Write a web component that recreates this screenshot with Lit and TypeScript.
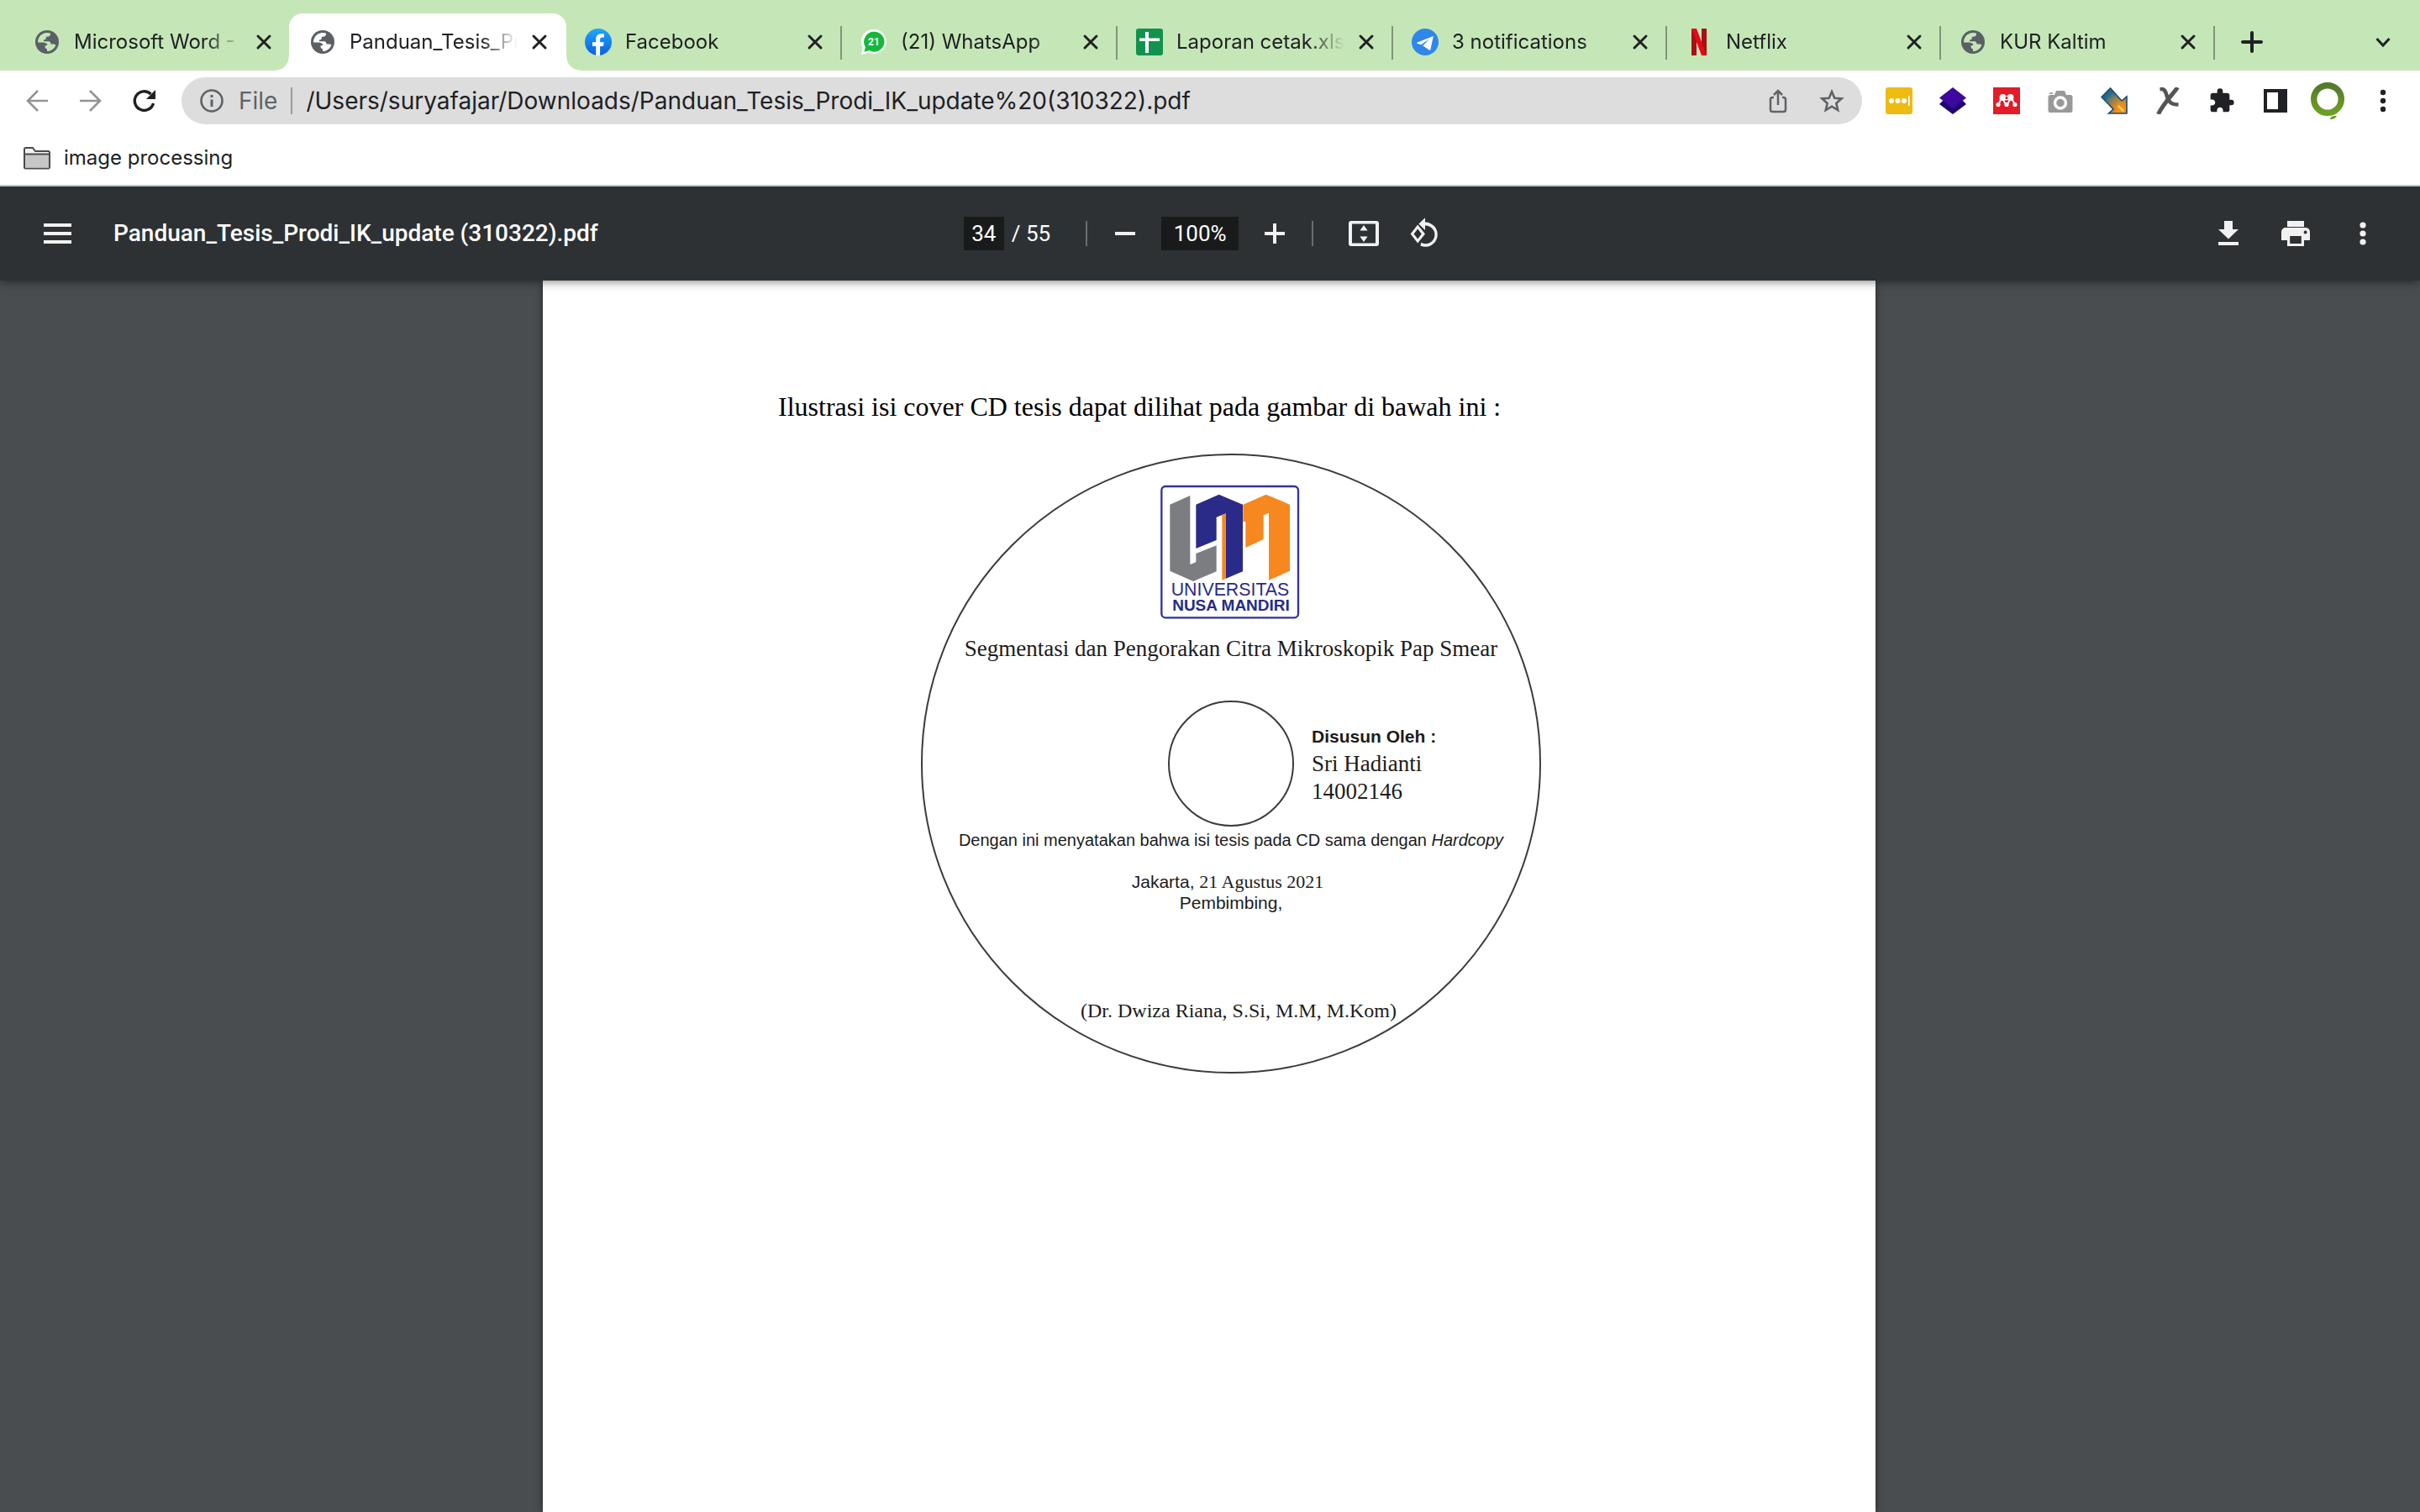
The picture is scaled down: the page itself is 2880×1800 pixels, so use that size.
import { LitElement, html, css, svg, nothing } from "lit";
import { customElement, property, state } from "lit/decorators.js";
import { classMap } from "lit/directives/class-map.js";

const globe = svg`<svg viewBox="-2 -2 32 32">
  <circle cx="14" cy="14" r="14" fill="#5b5f66"/>
  <path class="land" d="M3 14.400C3 8 7.600 3.200 14 3c1.600 0 3 .3 4.200 .8-.2 2.600-1.500 3.900-3.900 3.900H12.800v1.800c0 1.200-.9 1.800-2.200 1.800-.6 0-.8 1-.4 2h5.600c1.900 0 2.700 1.300 2.700 3.200h3.200c1.100 0 2 .3 2.700.9C23 21.600 19 24.800 14 25v-2.800c-1.500 0-2.400-.9-2.400-2.400v-1.600c1.600 0 2.600-.4 3-1.300-1.300-1.500-3.200-2.500-5.400-2.500z"/>
</svg>`;

const facebook = svg`<svg viewBox="0 0 32 32">
  <defs><linearGradient id="fb" x1="0" y1="0" x2="0" y2="1"><stop offset="0" stop-color="#1fa8fb"/><stop offset="1" stop-color="#0a5fe0"/></linearGradient></defs>
  <circle cx="16" cy="16" r="16" fill="url(#fb)"/>
  <path d="M13.200 32V21H9v-4.700h4.200v-3.600c0-4.200 2.500-6.500 6.200-6.500 1.300 0 2.600.1 3.500.3v4h-2.100c-2 0-2.700 1.200-2.700 2.500v3.300h4.600L22 21h-3.900v11z" fill="#fff"/>
</svg>`;

const whatsapp = svg`<svg viewBox="0 0 32 32">
  <path d="M16.500 1a14.500 14.500 0 1 1-6.200 27.700L1 31l1.800-8.600A14.500 14.500 0 0 1 16.500 1z" fill="#fff"/>
  <path d="M16.500 3.700a12 12 0 1 1-6 22.400L4.500 27.700l1.400-5.800A12 12 0 0 1 16.500 3.700z" fill="#14b93c"/>
  <text x="16" y="20" text-anchor="middle" font-family="Roboto, sans-serif" font-weight="700" font-size="12" fill="#fff">21</text>
</svg>`;

const sheets = svg`<svg viewBox="0 0 32 32"><rect width="32" height="32" rx="3" fill="#12934d"/><path d="M11 4h4v7.500h13V15H15v14h-4V15H4v-3.500h7z" fill="#fff"/></svg>`;

const telegram = svg`<svg viewBox="0 0 32 32"><circle cx="16" cy="16" r="16" fill="#2f87ec"/><path d="M25 9.200 6.800 16.400c-.9.400-.8 1 0 1.300l4.400 1.500L21 12.400l-7.600 8 7.500 5.200c.7.400 1.300.2 1.500-.7l3.200-14.800c.2-.8-.2-1.200-.6-.9z" fill="#fff"/></svg>`;

const netflix = svg`<svg viewBox="0 0 32 32"><path d="M7 0h6v32H7z" fill="#a80f16"/><path d="M19 0h6v32h-6z" fill="#a80f16"/><path d="M7 0h6l12 32h-6z" fill="#e50914"/></svg>`;

const closeIcon = svg`<svg viewBox="0 0 32 32"><path d="m9 9 14 14M23 9 9 23" stroke="#202124" stroke-width="3" stroke-linecap="round"/></svg>`;

const ICONS: Record<string, unknown> = {
  share: svg`<svg viewBox="0 0 32 32" fill="none" stroke="#5f6368" stroke-width="2.500"><path d="M11 12H9.500A2.500 2.500 0 0 0 7 14.500v12A2.500 2.500 0 0 0 9.500 29h13a2.500 2.500 0 0 0 2.500-2.500v-12a2.500 2.500 0 0 0-2.500-2.500H21M16 21V4M11 9l5-5 5 5"/></svg>`,
  star: svg`<svg viewBox="0 0 32 32" fill="none" stroke="#5f6368" stroke-width="2.600"><path d="m16 5 3.300 7.700 8.300.7-6.300 5.500 1.900 8.100-7.200-4.300L8.800 27l1.900-8.100-6.300-5.500 8.300-.7z"/></svg>`,
  yellow: svg`<svg viewBox="0 0 32 32"><rect width="32" height="32" rx="3" fill="#edbb12"/><g fill="#fff"><circle cx="7" cy="16" r="3"/><circle cx="14.500" cy="16" r="3"/><circle cx="22" cy="16" r="3"/><path d="M27 10h1.500v12H27z"/></g></svg>`,
  layers: svg`<svg viewBox="0 0 32 32"><path d="m0 20 4-4h24l4 4-16 12z" fill="#20006e"/><path d="m16 0 16 12.500L16 25 0 12.500z" fill="#3d089f"/></svg>`,
  mendeley: svg`<svg viewBox="0 0 32 32"><path d="M0 0h32v32H0z" fill="#e31c27"/><g fill="#fff"><circle cx="11.500" cy="12" r="4"/><circle cx="20.500" cy="12" r="4"/><circle cx="6" cy="20.500" r="2.600"/><circle cx="16" cy="20.500" r="2.600"/><circle cx="26" cy="20.500" r="2.600"/></g><path d="M9 13c0 3-1 5-3 7M23 13c0 3 1 5 3 7M12.500 14c.5 3 1 5 3 6M19.500 14c-.5 3-1 5-3 6" fill="none" stroke="#fff" stroke-width="1.800"/><circle cx="16" cy="13" r="2.500" fill="#fff"/><circle cx="16" cy="12.500" r="1.600" fill="#e31c27"/></svg>`,
  camera: svg`<svg viewBox="0 0 32 32"><path d="M11 4h10l2 5h5a2.500 2.500 0 0 1 2.500 2.500v16A2.500 2.500 0 0 1 28 30H4a2.500 2.500 0 0 1-2.500-2.500v-16A2.500 2.500 0 0 1 4 9h5z" fill="#999"/><path d="M3 6h4v2H3z" fill="#aaa"/><circle cx="16" cy="18.500" r="6.500" fill="#999" stroke="#fff" stroke-width="3.500"/></svg>`,
  arrow: svg`<svg viewBox="0 0 32 32"><defs><radialGradient id="glow" cx=".8" cy=".85" r=".8"><stop offset="0" stop-color="#ff9a0d"/><stop offset=".35" stop-color="#e08a22"/><stop offset=".75" stop-color="#6f7a68"/><stop offset="1" stop-color="#236a8c"/></radialGradient></defs><path d="M1 11.500 11.500 1 25 16l6-5v20H9.500L15 26z" fill="url(#glow)" stroke="#174d72" stroke-width="1.600"/><path d="m21 22 6 6" stroke="#ffe06a" stroke-width="2"/></svg>`,
  cross: svg`<svg viewBox="0 0 32 32" fill="none" stroke="#555"><path d="M27.500 0C22 8 10 20 4.500 32" stroke-width="5"/><path d="M6.500 2H9c3.500 0 4.500 4 6 9 2 6.500 5 9.500 13.500 9.500" stroke-width="4.500"/></svg>`,
  puzzle: svg`<svg viewBox="0 0 24 24"><path d="M20.500 11H19V7c0-1.100-.9-2-2-2h-4V3.500a2.500 2.500 0 0 0-5 0V5H4c-1.100 0-2 .9-2 2v3.800h1.500c1.500 0 2.700 1.200 2.700 2.700s-1.200 2.700-2.700 2.700H2V20c0 1.100.9 2 2 2h3.800v-1.500c0-1.500 1.200-2.700 2.700-2.700s2.700 1.200 2.700 2.700V22H17c1.100 0 2-.9 2-2v-4h1.500a2.500 2.500 0 0 0 0-5z" fill="#202124"/></svg>`,
  panel: svg`<svg viewBox="0 0 32 32"><path fill-rule="evenodd" d="M2 2h28v28H2zm4 4v20h13V6z" fill="#202124"/></svg>`,
  back: svg`<svg viewBox="0 0 32 32" fill="none" stroke="#929496" stroke-width="2.600"><path d="M29 16H5M17 4 5 16l12 12"/></svg>`,
  forward: svg`<svg viewBox="0 0 32 32" fill="none" stroke="#929496" stroke-width="2.600"><path d="M3 16h24M15 4l12 12-12 12"/></svg>`,
  reload: svg`<svg viewBox="0 0 32 32"><path d="M26.500 19A11.300 11.300 0 1 1 23.500 8" fill="none" stroke="#202124" stroke-width="3.400"/><path d="M29 3v11H18z" fill="#202124"/></svg>`,
};

@customElement("browser-tab")
class BrowserTab extends LitElement {
  @property() label = "";
  @property({ attribute: false }) icon: unknown = nothing;
  @property({ type: Boolean, reflect: true }) active = false;

  static styles = css`
    :host {
      display: flex;
      align-items: center;
      min-width: 0;
      height: 68px;
      padding: 0 14px 0 24px;
      box-sizing: border-box;
      position: relative;
      --land: #c5e7b7;
    }
    :host([active]) {
      padding-right: 16px;
      background: #fff;
      border-radius: 16px 16px 0 0;
      --land: #fff;
    }
    :host([active])::before,
    :host([active])::after {
      content: "";
      position: absolute;
      bottom: 0;
      width: 16px;
      height: 16px;
    }
    :host([active])::before {
      right: 100%;
      background: radial-gradient(circle at 0 0, transparent 15px, #fff 16px);
    }
    :host([active])::after {
      left: 100%;
      background: radial-gradient(circle at 100% 0, transparent 15px, #fff 16px);
    }
    :host([divided])::after {
      content: "";
      position: absolute;
      right: -2px;
      top: 15px;
      width: 2px;
      height: 40px;
      background: #80957a;
    }
    svg {
      display: block;
      width: 32px;
      height: 32px;
    }
    .land {
      fill: var(--land);
    }
    .icon {
      flex: none;
    }
    .title {
      flex: 1;
      min-width: 0;
      margin: 0 10px 0 16px;
      overflow: hidden;
      white-space: nowrap;
      font-size: 24px;
      line-height: 32px;
      color: #202124;
      mask-image: linear-gradient(to right, #000 calc(100% - 44px), transparent);
    }
    button {
      flex: none;
      padding: 0;
      border: 0;
      background: none;
    }
  `;

  render() {
    return html`
      <span class="icon">${this.icon}</span>
      <span class="title">${this.label}</span>
      <button aria-label="Close tab">${closeIcon}</button>
    `;
  }
}

@customElement("cd-cover")
class CdCover extends LitElement {
  static styles = css`
    :host {
      display: flex;
      flex-direction: column;
      align-items: center;
      width: 738px;
      height: 738px;
      box-sizing: border-box;
      padding-top: 35px;
      border: 2px solid #3c3c3c;
      border-radius: 50%;
      color: #1c1c1c;
      white-space: nowrap;
      font: 21px/25px "Liberation Sans", sans-serif;
    }
    .logo {
      display: block;
      width: 167px;
      height: 160px;
      margin-right: 3px;
    }
    .serif {
      font-family: "Liberation Serif", serif;
    }
    .subject {
      margin-top: 19px;
      font-size: 27px;
      line-height: 32px;
    }
    .middle {
      display: grid;
      grid-template-columns: 1fr 150px 1fr;
      align-items: center;
      align-self: stretch;
      margin-top: 46px;
    }
    .hole {
      grid-column: 2;
      height: 150px;
      box-sizing: border-box;
      border: 2px solid #3c3c3c;
      border-radius: 50%;
    }
    .author {
      padding-left: 21px;
      font-size: 27px;
      line-height: 33px;
    }
    .author strong {
      display: block;
      font: bold 21px/33px "Liberation Sans", sans-serif;
    }
    .author span {
      display: block;
    }
    .statement {
      margin-top: 4px;
      font-size: 20px;
    }
    .place {
      margin-top: 24px;
      padding-right: 8px;
    }
    .place .serif {
      font-size: 22px;
    }
    .signer {
      margin-top: 104px;
      padding-left: 18px;
      font-size: 24px;
    }
  `;

  render() {
    return html`
      <svg class="logo" viewBox="60 49 501 480" role="img" aria-label="Universitas Nusa Mandiri">
        <rect x="67" y="55" width="488" height="469" rx="14" fill="#fff" stroke="#34329a" stroke-width="7"/>
        <path d="M97 120 169 88V334L190 326V295L263 266V359L180 394 97 357z" fill="#7b7d80"/>
        <path d="M190 120 272 84 357 120V359L297 384V152L263 165V247L190 277z" fill="#2a2a88"/>
        <path d="M283 157 297 152V384L283 390z" fill="#f6881f"/>
        <path d="M358 120 440 84 525 120V357L450 390V150L431 158V244L367 274V180L358 182z" fill="#f6881f"/>
        <g text-anchor="middle" font-family="Liberation Sans, sans-serif" fill="#2a2a88">
          <text x="312" y="446" font-size="64">UNIVERSITAS</text>
          <text x="315" y="498" font-size="57" font-weight="700">NUSA MANDIRI</text>
        </g>
      </svg>
      <div class="subject serif">Segmentasi dan Pengorakan Citra Mikroskopik Pap Smear</div>
      <div class="middle">
        <div class="hole"></div>
        <div class="author serif"><strong>Disusun Oleh :</strong><span>Sri Hadianti</span><span>14002146</span></div>
      </div>
      <div class="statement">Dengan ini menyatakan bahwa isi tesis pada CD sama dengan <em>Hardcopy</em></div>
      <div class="place">Jakarta, <span class="serif">21 Agustus 2021</span></div>
      <div>Pembimbing,</div>
      <div class="signer serif">(Dr. Dwiza Riana, S.Si, M.M, M.Kom)</div>
    `;
  }
}

@customElement("app-root")
class AppRoot extends LitElement {
  @state() private activeTab = 1;

  private tabs = [
    { label: "Microsoft Word - PANDUAN", icon: globe },
    { label: "Panduan_Tesis_Prodi_IK", icon: globe },
    { label: "Facebook", icon: facebook },
    { label: "(21) WhatsApp", icon: whatsapp },
    { label: "Laporan cetak.xlsx", icon: sheets },
    { label: "3 notifications", icon: telegram },
    { label: "Netflix", icon: netflix },
    { label: "KUR Kaltim", icon: globe },
  ];

  private extensions = [
    ["yellow", "Password manager"],
    ["layers", "Layers"],
    ["mendeley", "Mendeley"],
    ["camera", "Screenshot"],
    ["arrow", "Download manager"],
    ["cross", "Math"],
    ["puzzle", "Extensions"],
    ["panel", "Side panel"],
  ];

  static styles = css`
    :host {
      display: flex;
      flex-direction: column;
      height: 100vh;
      overflow: hidden;
      background: #fff;
      font-family: Inter, sans-serif;
      color: #202124;
    }
    button {
      flex: none;
      display: grid;
      place-items: center;
      padding: 0;
      border: 0;
      background: none;
    }
    input {
      border: 0;
      padding: 0;
      margin: 0;
      outline: 0;
      background: none;
      color: inherit;
      font: inherit;
    }
    svg {
      display: block;
      width: 32px;
      height: 32px;
    }
    .strip {
      flex: none;
      display: flex;
      align-items: flex-end;
      height: 84px;
      padding: 0 12px 0 16px;
      background: #c5e7b7;
    }
    .tab {
      flex: 0 1 328px;
    }
    .tab[active] {
      flex-basis: 330px;
      margin-right: -2px;
    }
    .tab.tail {
      flex-basis: 326px;
    }
    .strip button {
      width: 64px;
      height: 68px;
    }
    .add {
      margin: 0 auto 0 14px;
    }
    .bar {
      flex: none;
      display: flex;
      align-items: center;
      height: 72px;
      padding: 0 8px 0 12px;
    }
    .bar button {
      width: 64px;
      height: 56px;
    }
    .omnibox {
      flex: 1;
      display: flex;
      align-items: center;
      height: 56px;
      margin: 0 12px;
      padding: 0 4px 0 20px;
      border-radius: 28px;
      background: #ddd;
      font-size: 28px;
      line-height: 36px;
    }
    .scheme {
      margin: 0 16px;
      color: #5f6368;
    }
    .omnibox input {
      flex: 1;
      min-width: 0;
      margin-left: 16px;
    }
    .rule {
      flex: none;
      width: 2px;
      height: 32px;
      background: #9a9b9d;
    }
    .bar .avatar {
      width: 60px;
    }
    .bar .menu {
      width: 72px;
    }
    .avatar svg {
      width: 40px;
      height: 48px;
    }
    .bookmarks {
      flex: none;
      display: flex;
      align-items: center;
      height: 64px;
      padding: 0 28px;
      border-bottom: 2px solid #c0c4c5;
    }
    .bookmarks a {
      display: flex;
      align-items: center;
      gap: 16px;
      color: inherit;
      text-decoration: none;
      font-size: 24px;
      line-height: 32px;
    }
    .pdfbar {
      flex: none;
      display: grid;
      grid-template-columns: 1fr auto 1fr;
      align-items: center;
      height: 112px;
      padding: 0 36px;
      background: #2d3134;
      color: #fff;
      font: 26px/40px Roboto, sans-serif;
      box-shadow: 0 0 12px rgba(0, 0, 0, 0.6);
      clip-path: inset(0 0 -20px 0);
      z-index: 1;
    }
    .pdfbar button {
      width: 64px;
      height: 64px;
    }
    .pdfbar svg {
      width: 48px;
      height: 48px;
      fill: #f1f1f1;
    }
    .lead,
    .center,
    .trail {
      display: flex;
      align-items: center;
    }
    .lead h1 {
      margin: 0 0 0 35px;
      font-size: 28px;
      font-weight: 500;
      line-height: 40px;
    }
    .trail {
      justify-content: flex-end;
      gap: 16px;
    }
    .field {
      height: 40px;
      background: #191b1a;
      text-align: center;
    }
    .field.page {
      width: 48px;
    }
    .field.zoom {
      width: 92px;
      margin: 0 11px;
    }
    .total {
      margin: 0 42px 0 9px;
      white-space: pre;
    }
    .center .rule {
      height: 30px;
      background: #6a6d6f;
    }
    .minus {
      margin-left: 13px;
    }
    .plus {
      margin-right: 12px;
    }
    .fit {
      margin: 0 10px 0 28px;
    }
    .rotate {
      margin-right: 4px;
    }
    .viewer {
      flex: 1;
      min-height: 0;
      display: flex;
      justify-content: center;
      padding-right: 2px;
      overflow: hidden;
      background: #494d50;
    }
    .sheet {
      width: 1586px;
      padding: 132px 280px 0;
      box-sizing: border-box;
      background: #fff;
      box-shadow: 0 0 8px rgba(0, 0, 0, 0.5);
      color: #000;
    }
    .sheet p {
      margin: 0;
      font: 32px/36px "Liberation Serif", serif;
    }
    .sheet cd-cover {
      margin: 38px 0 0 170px;
    }
    .land {
      fill: #c5e7b7;
    }
  `;

  render() {
    return html`
      <nav class="strip" aria-label="Tabs">
        ${this.tabs.map(
          (t, i) => html`<browser-tab
            class=${classMap({ tab: true, tail: i > 4 })}
            .label=${t.label}
            .icon=${t.icon}
            ?active=${i === this.activeTab}
            ?divided=${i > this.activeTab}
            @click=${() => (this.activeTab = i)}
          ></browser-tab>`
        )}
        <button class="add" aria-label="New tab">
          <svg viewBox="0 0 32 32"><path d="M16 5v22M5 16h22" stroke="#202124" stroke-width="4" stroke-linecap="round"/></svg>
        </button>
        <button aria-label="Search tabs">
          <svg viewBox="0 0 32 32"><path d="m8.500 12 7.500 8 7.500-8" fill="none" stroke="#202124" stroke-width="3"/></svg>
        </button>
      </nav>

      <div class="bar">
        <button aria-label="Back">${ICONS.back}</button>
        <button aria-label="Forward">${ICONS.forward}</button>
        <button aria-label="Reload">${ICONS.reload}</button>
        <div class="omnibox">
          <svg viewBox="0 0 32 32"><circle cx="16" cy="16" r="12.500" fill="none" stroke="#5f6368" stroke-width="2.600"/><path d="M14.500 14.500h3V23h-3zM14.500 9h3v3h-3z" fill="#5f6368"/></svg>
          <span class="scheme">File</span>
          <span class="rule"></span>
          <input aria-label="Address" value="/Users/suryafajar/Downloads/Panduan_Tesis_Prodi_IK_update%20(310322).pdf" />
          <button aria-label="Share">${ICONS.share}</button>
          <button aria-label="Bookmark">${ICONS.star}</button>
        </div>
        ${this.extensions.map(([id, name]) => html`<button aria-label=${name}>${ICONS[id]}</button>`)}
        <button class="avatar" aria-label="Profile">
          <svg viewBox="0 0 40 48"><defs><linearGradient id="ring" x1="0" y1="0" x2="0" y2="1"><stop offset="0" stop-color="#547a2c"/><stop offset="1" stop-color="#6da023"/></linearGradient></defs><circle cx="20" cy="22" r="16.300" fill="none" stroke="url(#ring)" stroke-width="7.400"/><path d="M23 46c0-3 3-4.500 8-4-1 2-3 4-8 4z" fill="#6da023"/></svg>
        </button>
        <button class="menu" aria-label="Menu">
          <svg viewBox="0 0 32 32"><g fill="#202124"><circle cx="16" cy="6" r="3.200"/><circle cx="16" cy="16" r="3.200"/><circle cx="16" cy="26" r="3.200"/></g></svg>
        </button>
      </div>

      <div class="bookmarks">
        <a href="#">
          <svg viewBox="0 0 32 32"><path d="M1 5.500A1.500 1.500 0 0 1 2.500 4H11l3 4h15.500A1.500 1.500 0 0 1 31 9.500V27a1.500 1.500 0 0 1-1.500 1.500h-27A1.500 1.500 0 0 1 1 27z" fill="#f4f4f4" stroke="#4a4a4a" stroke-width="2"/><path d="M2 12h28v15.500H2z" fill="#c6c6c6"/><path d="M1 11.500h30" stroke="#4a4a4a" stroke-width="2"/></svg>
          image processing
        </a>
      </div>

      <header class="pdfbar">
        <div class="lead">
          <button aria-label="Sidebar"><svg viewBox="0 0 24 24"><path d="M4 18h16.500v-2H4zm0-5h16.500v-2H4zm0-7v2h16.500V6z"/></svg></button>
          <h1>Panduan_Tesis_Prodi_IK_update (310322).pdf</h1>
        </div>
        <div class="center">
          <input class="field page" aria-label="Page number" value="34" />
          <span class="total">/ 55</span>
          <span class="rule"></span>
          <button class="minus" aria-label="Zoom out"><svg viewBox="0 0 24 24"><path d="M6 11h12v2H6z"/></svg></button>
          <input class="field zoom" aria-label="Zoom level" value="100%" />
          <button class="plus" aria-label="Zoom in"><svg viewBox="0 0 24 24"><path d="M18 13h-5v5h-2v-5H6v-2h5V6h2v5h5z"/></svg></button>
          <span class="rule"></span>
          <button class="fit" aria-label="Fit to page"><svg viewBox="0 0 24 24"><path fill-rule="evenodd" d="M4.500 4.500h15A1.500 1.500 0 0 1 21 6v12a1.500 1.500 0 0 1-1.500 1.500h-15A1.500 1.500 0 0 1 3 18V6a1.500 1.500 0 0 1 1.500-1.500zM5 6.200v11.600h14V6.200zM12 7l2.300 3.300H9.700zM12 17l-2.300-3.300h4.600z"/></svg></button>
          <button class="rotate" aria-label="Rotate"><svg viewBox="0 0 24 24"><path fill-rule="evenodd" d="M7.100 6.800 2.800 12.300 7.100 17.800 11.500 12.300zM7.100 9.300l2.300 3-2.300 3-2.300-3z"/><path d="M11.500 2.600v2.700a7.300 7.300 0 1 1-2.800 14l.5-1.900a5.400 5.400 0 1 0 2.300-10.100v2.700L7.700 6.300z"/></svg></button>
        </div>
        <div class="trail">
          <button aria-label="Download"><svg viewBox="0 0 24 24"><path d="M18 9.500h-3.500v-5h-5v5H6l6 5.800zM6 17v2h12v-2z"/></svg></button>
          <button aria-label="Print"><svg viewBox="0 0 24 24"><path fill-rule="evenodd" d="M17 4.500H7V8h10zM18 8.500H6a2.500 2.500 0 0 0-2.500 2.500v5H7v3.500h10V16h3.500v-5A2.500 2.500 0 0 0 18 8.500zM15.400 18H8.600v-4.500h6.800zm2.400-5.800a1 1 0 1 1 0-2 1 1 0 0 1 0 2z"/></svg></button>
          <button aria-label="More actions"><svg viewBox="0 0 24 24"><circle cx="12" cy="7" r="1.800"/><circle cx="12" cy="12" r="1.800"/><circle cx="12" cy="17" r="1.800"/></svg></button>
        </div>
      </header>

      <main class="viewer">
        <article class="sheet">
          <p>Ilustrasi isi cover CD tesis dapat dilihat pada gambar di bawah ini :</p>
          <cd-cover></cd-cover>
        </article>
      </main>
    `;
  }
}
